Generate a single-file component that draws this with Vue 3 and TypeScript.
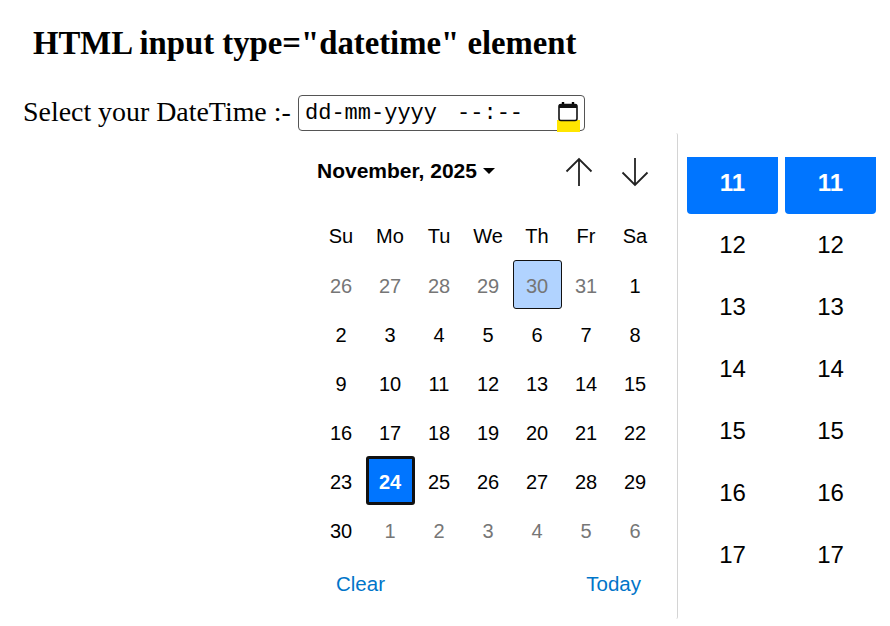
<script setup lang="ts">
interface Day {
  label: number
  muted?: boolean
  focused?: boolean
  today?: boolean
}

const weekdays = ['Su', 'Mo', 'Tu', 'We', 'Th', 'Fr', 'Sa']

const days: Day[] = [
  ...[26, 27, 28, 29, 30, 31].map((label) => ({ label, muted: true, focused: label === 30 })),
  ...Array.from({ length: 30 }, (_, i) => ({ label: i + 1, today: i + 1 === 24 })),
  ...[1, 2, 3, 4, 5, 6].map((label) => ({ label, muted: true })),
]

const hours = [11, 12, 13, 14, 15, 16, 17]
</script>

<template>
  <div class="page">
    <h1 class="title">HTML input type="datetime" element</h1>
    <div class="field-row">
      <label class="field-label">Select your DateTime :-</label>
      <div class="date-input">
        <span class="placeholder">dd-mm-yyyy</span>
        <span class="placeholder time-part">--:--</span>
        <span class="picker-mark"></span>
        <svg class="picker-icon" width="20" height="20" viewBox="0 0 20 20">
          <path d="M5 0v3M15 0v3" stroke="#000" stroke-width="2.400" fill="none" />
          <rect x="1" y="2.500" width="18" height="16" rx="2" fill="none" stroke="#111" stroke-width="1.600" />
          <rect x="1" y="2.500" width="18" height="3.500" fill="#111" />
        </svg>
      </div>
    </div>

    <div class="popup">
      <div class="date-panel">
        <div class="cal-head">
          <div class="month">
            <span>November, 2025</span>
            <span class="caret"></span>
          </div>
          <div class="nav">
            <svg width="28" height="30" viewBox="0 0 28 30">
              <path d="M14 29V2M1.500 14.500L14 2l12.500 12.500" fill="none" stroke="#222" stroke-width="1.800" />
            </svg>
            <svg width="28" height="30" viewBox="0 0 28 30">
              <path d="M14 1v27M1.500 15.500L14 28l12.500-12.500" fill="none" stroke="#222" stroke-width="1.800" />
            </svg>
          </div>
        </div>
        <div class="cal-grid">
          <div v-for="w in weekdays" :key="w" class="cell head">{{ w }}</div>
          <div
            v-for="(d, i) in days"
            :key="i"
            class="cell"
            :class="{ muted: d.muted, focused: d.focused, today: d.today }"
          >
            {{ d.label }}
          </div>
        </div>
        <div class="cal-foot">
          <span>Clear</span>
          <span>Today</span>
        </div>
      </div>
      <div class="time-panel">
        <div v-for="c in 2" :key="c" class="time-col">
          <div v-for="(h, i) in hours" :key="h" class="time-cell" :class="{ selected: i === 0 }">{{ h }}</div>
        </div>
      </div>
    </div>
  </div>
</template>

<style>
html,
body {
  background: #fff;
  overflow: hidden;
}
</style>

<style scoped>
.page {
  position: relative;
  width: 890px;
  height: 626px;
  overflow: hidden;
  font-family: "Liberation Serif", serif;
  color: #000;
}
.title {
  margin: 0;
  padding: 25px 0 0 33px;
  font-size: 32.75px;
  line-height: 37px;
  font-weight: bold;
}
.field-row {
  display: flex;
  align-items: center;
  gap: 7px;
  margin: 33px 0 0 23px;
}
.field-label {
  font-size: 27.9px;
  line-height: 34px;
  padding-bottom: 2px;
  width: 268px;
  white-space: nowrap;
}
.date-input {
  position: relative;
  width: 287px;
  height: 36px;
  box-sizing: border-box;
  border: 1px solid #555;
  border-radius: 4px;
  padding-left: 6px;
  display: flex;
  align-items: center;
}
.placeholder {
  font-family: "Liberation Mono", monospace;
  font-size: 22px;
  white-space: pre;
}
.time-part {
  margin-left: 20px;
}
.picker-mark {
  position: absolute;
  left: 258px;
  top: 24px;
  width: 23px;
  height: 12px;
  background: #ffe600;
}
.picker-icon {
  position: absolute;
  left: 259px;
  top: 6px;
}
.popup {
  position: absolute;
  left: 298px;
  top: 133px;
  right: 0;
  height: 486px;
  display: flex;
  background: #fff;
  font-family: "Liberation Sans", sans-serif;
}
.date-panel {
  width: 380px;
  box-sizing: border-box;
  padding-left: 19px;
  border-right: 1px solid #d4d4d4;
  border-radius: 0 2px 2px 0;
  flex: none;
}
.cal-head {
  height: 78px;
  display: flex;
  justify-content: space-between;
  padding: 24px 28px 0 0;
  box-sizing: border-box;
}
.month {
  display: flex;
  align-items: flex-start;
  gap: 6px;
  font-size: 21px;
  font-weight: bold;
  line-height: 28px;
}
.caret {
  margin-top: 11px;
  border-left: 6px solid transparent;
  border-right: 6px solid transparent;
  border-top: 6px solid #000;
}
.nav {
  display: flex;
  gap: 28px;
}
.cal-grid {
  display: grid;
  grid-template-columns: repeat(7, 49px);
  grid-auto-rows: 49px;
}
.cell {
  display: flex;
  align-items: center;
  justify-content: center;
  font-size: 20px;
  box-sizing: border-box;
  border-radius: 3px;
  padding: 3px 1px 0 0;
}
.cell.head {
  padding-top: 2px;
}
.muted {
  color: #767676;
}
.focused {
  background: #b1d3ff;
  border: 1px solid #111;
}
.today {
  background: #0075ff;
  color: #fff;
  font-weight: bold;
  border: 3px solid #111;
}
.cal-foot {
  display: flex;
  justify-content: space-between;
  padding: 18px 36px 0 19px;
  font-size: 20.5px;
  line-height: 24px;
  color: #0075c9;
}
.time-panel {
  display: flex;
  gap: 7px;
  padding: 24px 0 0 9px;
}
.time-col {
  width: 91px;
}
.time-cell {
  height: 57px;
  margin-bottom: 5px;
  padding-bottom: 6px;
  box-sizing: border-box;
  display: flex;
  align-items: center;
  justify-content: center;
  font-size: 24px;
  border-radius: 0 0 4px 4px;
}
.selected {
  background: #0075ff;
  color: #fff;
  font-weight: bold;
}
</style>
